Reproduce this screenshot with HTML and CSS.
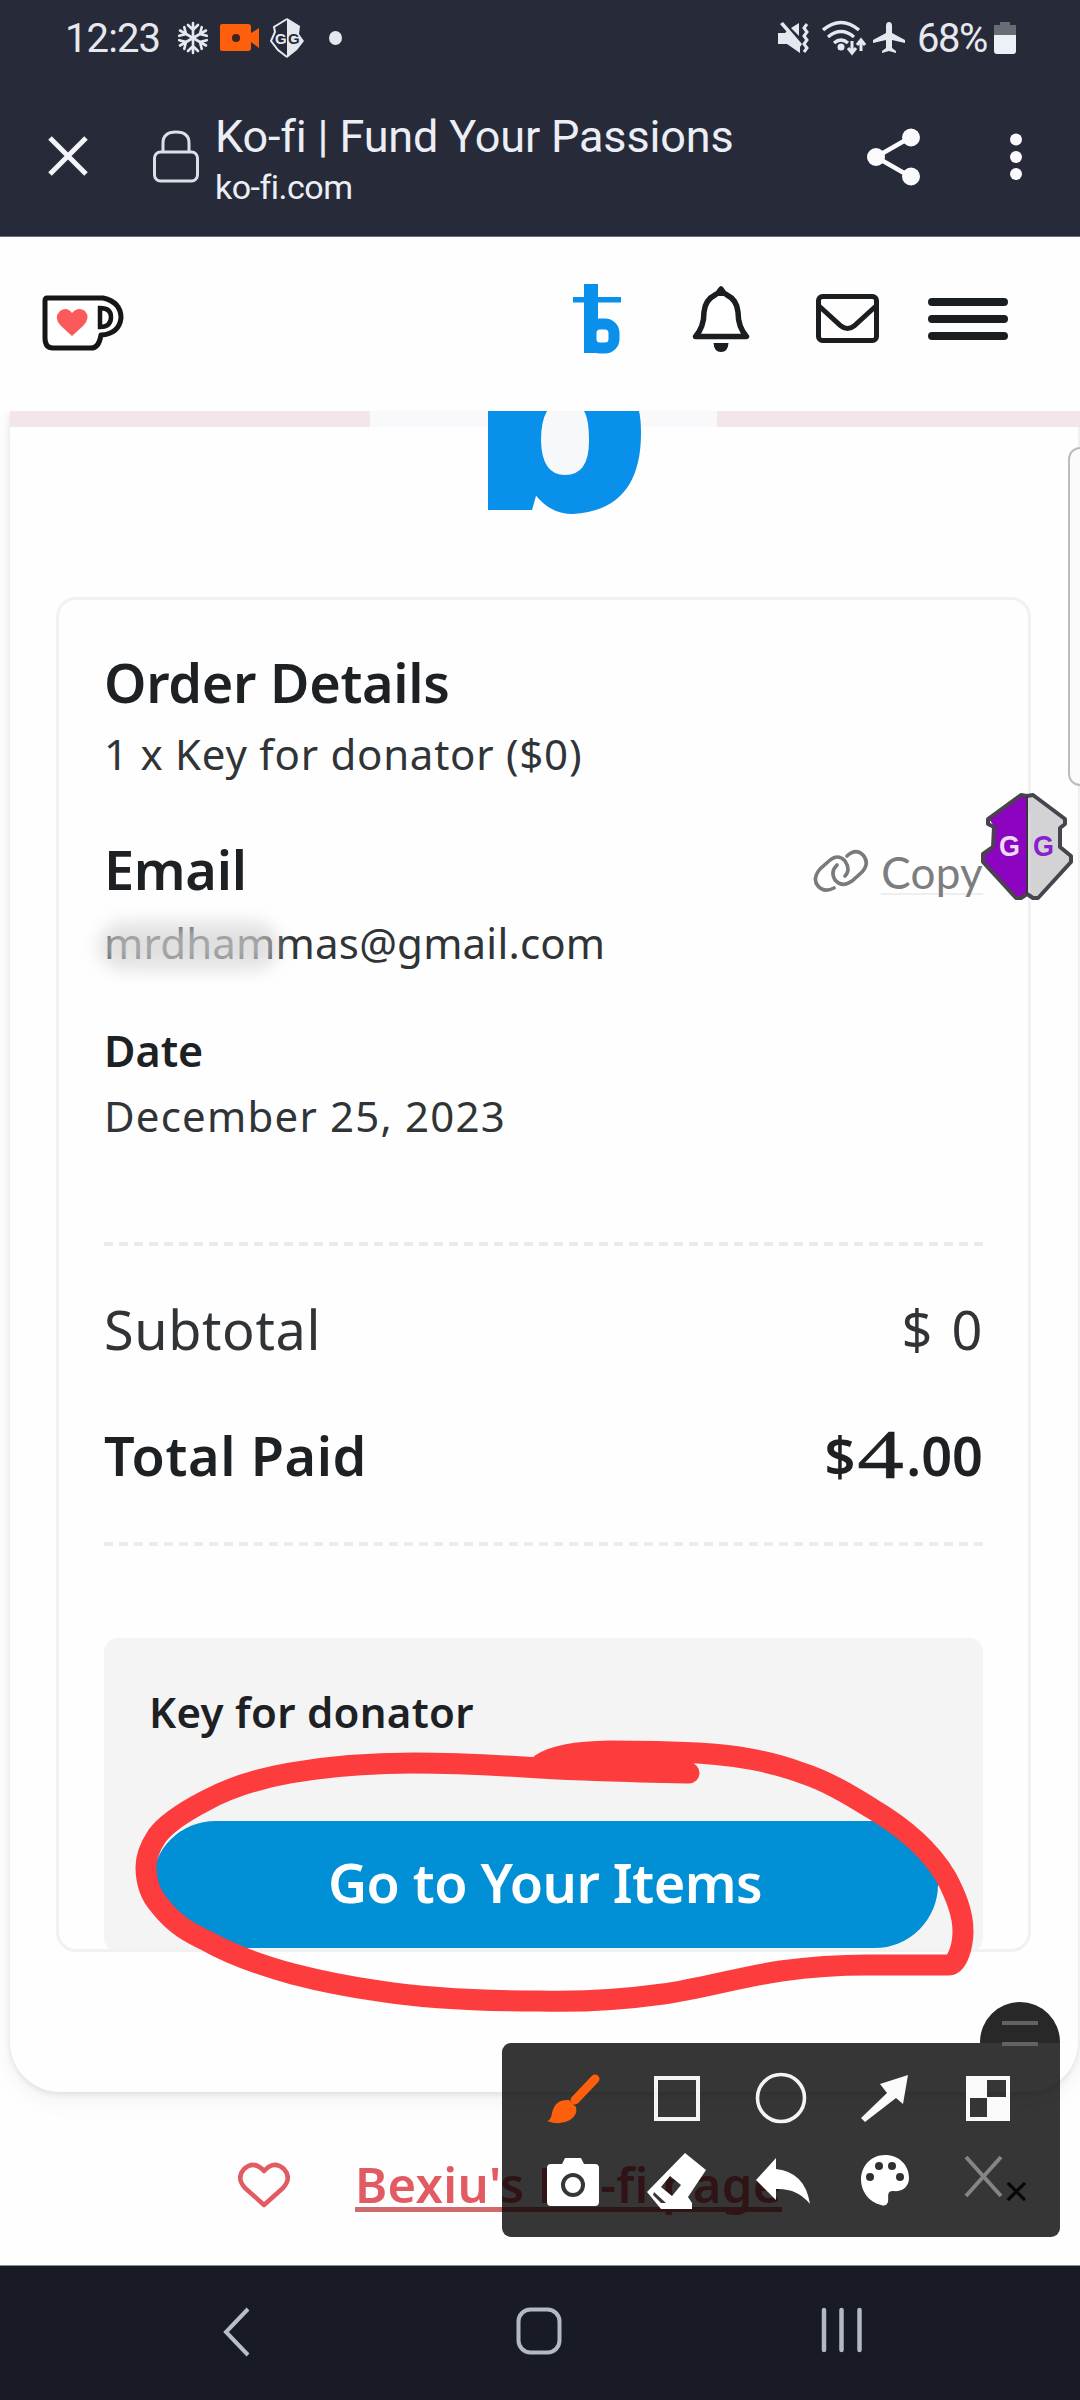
FILE: index.html
```html
<!DOCTYPE html>
<html lang="en">
<head>
<meta charset="utf-8">
<title>Ko-fi | Fund Your Passions</title>
<link rel="stylesheet" href="styles.css">
</head>
<body>
<div class="screen">
  <div class="status">
    <span class="clock">12:23</span>
    <svg class="i-snow" width="32" height="34" viewBox="-16 -17 32 34" fill="none" stroke="#e6e8f0" stroke-width="2.6" stroke-linecap="round"><g id="arm"><path d="M0-15V15M-5-13L0-8L5-13M-5 13L0 8L5 13"/></g><use href="#arm" transform="rotate(60)"/><use href="#arm" transform="rotate(120)"/></svg>
    <svg class="i-cam" width="40" height="30" viewBox="0 0 40 30"><path fill="#fd5f0c" d="M2 1H28Q31 1 31 4V10L39 5V25L31 19V25Q31 28 28 28H2Q0 28 0 26V3Q0 1 2 1Z"/><circle cx="16" cy="15" r="4" fill="#3c2420"/></svg>
    <svg class="i-gg" width="34" height="42" viewBox="0 0 34 42"><path fill="none" stroke="#e6e8f0" stroke-width="2" d="M17 2L4 10L5 15L1 24L8 33L17 40"/><path fill="#e6e8f0" d="M17 1L30 9L29 17L34 24L27 33L17 41Z"/><text x="5" y="27" font-size="15" fill="#e6e8f0">G</text><text x="18" y="27" font-size="15" fill="#272b39">G</text></svg>
    <span class="dot"></span>
    <span class="spacer"></span>
    <svg class="i-mute" width="32" height="32" viewBox="0 0 32 32"><path fill="#e6e8f0" d="M0 11H7L10 8L22 20V31L9 22H0ZM13 6L21 1V14ZM2 2L5 0L24 22L22 25Z"/><path fill="none" stroke="#e6e8f0" stroke-width="3" d="M29 2L26 6L29 10L26 14L29 18L26 22L29 26L26 30"/></svg>
    <svg class="i-wifi" width="44" height="36" viewBox="0 0 44 36" fill="none" stroke="#e6e8f0" stroke-width="3.4"><path d="M1 10Q19-5 37 10M6 17Q19 6 32 17M12 23Q19 17 26 23"/><circle cx="19" cy="27" r="3.5" fill="#e6e8f0" stroke="none"/><path stroke-width="3" d="M30 21V32M26 28L30 33L34 28M39 31V21M35 25L39 20L43 25"/></svg>
    <svg class="i-plane" width="32" height="32" viewBox="0 0 32 32"><path fill="#e6e8f0" d="M16 0Q19 0 19 4V11L32 18V21L19 18V26L23 29V31L16 29L9 31V29L13 26V18L0 21V18L13 11V4Q13 0 16 0Z"/></svg>
    <span class="pct">68%</span>
    <svg class="i-batt" width="22" height="32" viewBox="0 0 22 32"><path fill="#686c74" d="M6 0H16V3H22V14H0V3H6Z"/><path fill="#eef0f8" d="M0 13H22V29Q22 32 19 32H3Q0 32 0 29Z"/></svg>
  </div>

  <div class="browser">
    <svg class="b-close" width="40" height="40" viewBox="0 0 40 40" stroke="#f4f5fa" stroke-width="5"><path d="M2 2L38 38M38 2L2 38"/></svg>
    <svg class="b-lock" width="46" height="53" viewBox="0 0 46 53" fill="none" stroke="#dddfe8" stroke-width="3"><rect x="1.5" y="22" width="43" height="29" rx="6"/><path d="M10 22V13Q10 2 23 2Q36 2 36 13V22"/></svg>
    <div class="b-text"><div class="b-title">Ko-fi | Fund Your Passions</div><div class="b-url">ko-fi.com</div></div>
    <span class="spacer"></span>
    <svg class="b-share" width="54" height="58" viewBox="0 0 54 58"><path d="M44 9L9 29L44 49" fill="none" stroke="#fafafc" stroke-width="4.5"/><g fill="#fafafc"><circle cx="44" cy="9.500" r="9"/><circle cx="9" cy="29" r="9"/><circle cx="44" cy="48.500" r="9"/></g></svg>
    <svg class="b-more" width="12" height="48" viewBox="0 0 12 48" fill="#fafafc"><circle cx="6" cy="6.500" r="6"/><circle cx="6" cy="24" r="6"/><circle cx="6" cy="41" r="6"/></svg>
  </div>

  <div class="site">
    <svg class="s-cup" width="82" height="56" viewBox="0 0 82 56"><path fill="#fff" stroke="#141618" stroke-width="5" stroke-linejoin="round" d="M5 3H61Q79 7 79 23Q77 39 59 40Q57 53 49 53H11Q3 53 3 43V6Q3 3 5 3Z"/><path fill="#fff" stroke="#141618" stroke-width="4.500" d="M58 13V32Q69 32 69 22Q69 13 58 13Z"/><path fill="#fb5a5c" d="M30 41L19 31Q11 23 18 16Q25 11 30 18Q36 11 43 16Q49 23 41 31Z"/></svg>
    <span class="spacer"></span>
    <svg class="s-user" width="48" height="70" viewBox="0 0 48 70"><rect x="11" y="0" width="14" height="69" fill="#0890ea"/><rect x="0" y="13" width="48" height="5.500" fill="#0890ea"/><rect x="18" y="40" width="23" height="24" rx="9" fill="#fff" stroke="#0890ea" stroke-width="11"/><rect x="11" y="34" width="12" height="35" fill="#0890ea"/></svg>
    <svg class="s-bell" width="58" height="67" viewBox="0 0 58 67"><path fill="#fff" stroke="#1b1e20" stroke-width="5.500" stroke-linejoin="round" d="M3.500 50.500Q12 41 12 26Q13 14 23 9Q27 7 29 3Q31 7 35 9Q45 14 46 26Q46 41 54.500 50.500Z"/><path fill="#1b1e20" d="M24 6L29 0L34 6L32 10H26ZM21.500 57H36.500Q36 66 29 66Q22 66 21.500 57Z"/></svg>
    <svg class="s-mail" width="63" height="50" viewBox="0 0 63 50" fill="none" stroke="#1b1e20" stroke-width="5"><rect x="2.500" y="2.500" width="58" height="44" rx="4"/><path d="M3 12L25 32Q31.500 37 38 32L60 12"/></svg>
    <svg class="s-menu" width="80" height="42" viewBox="0 0 80 42" fill="#1b1e20"><rect width="80" height="8" rx="4"/><rect y="17" width="80" height="8" rx="4"/><rect y="34" width="80" height="8" rx="4"/></svg>
  </div>

  <div class="page">
    <div class="card">
      <div class="banner"><span class="pink"></span><span class="gap"></span><span class="pink right"></span></div>
      <svg class="avatar" width="156" height="106" viewBox="0 0 156 106"><path fill="#0890ea" d="M0 0H60V85H48L44 99H0Z"/><path fill="#0890ea" d="M46 82Q61 103 85 103Q153 99 153 22Q153 8 151 0H30V82Z"/><path fill="#f7f8fa" d="M59 0Q53 10 53 30Q54 64 77 64Q101 64 101 30Q101 8 96 0Z"/></svg>
      <div class="order">
        <div class="h1 od">Order Details</div>
        <div class="line item">1 x Key for donator ($0)</div>
        <div class="email-row"><div class="h1 em">Email</div>
          <div class="copy"><svg width="56" height="44" viewBox="0 0 56 44" fill="none" stroke="#777b7d" stroke-width="3.600" stroke-linecap="round"><path d="M21 39Q11 44 5 37Q-1 30 7 20L16 12Q25 4 32 12Q38 21 32 27"/><path d="M34 7Q43-1 50 6Q57 14 49 23L39 32Q29 39 22 31Q17 23 24 16"/></svg><span class="copy-t">Copy</span></div>
        </div>
        <div class="line addr">mrdhammas@gmail.com<span class="smudge"></span></div>
        <div class="date">Date</div>
        <div class="line dval">December 25, 2023</div>
        <div class="dash d1"></div>
        <div class="row sub"><span class="sub-l">Subtotal</span><span class="sub-r">$ 0</span></div>
        <div class="row tot"><span class="tot-l">Total Paid</span><span class="tot-r">$<span class="four">4</span>.00</span></div>
        <div class="dash d2"></div>
        <div class="itembox">
          <div class="key">Key for donator</div>
          <div class="btn"><span>Go to Your Items</span></div>
        </div>
      </div>
    </div>
    <div class="foot">
      <svg width="52" height="46" viewBox="0 0 52 46" fill="none" stroke="#e25a62" stroke-width="4.500" stroke-linejoin="round"><path d="M26 43L7 26Q-2 16 6 7Q16-2 26 9Q36-2 46 7Q54 16 45 26Z"/></svg>
      <span class="foot-t">Bexiu's Ko-fi page</span>
      <span class="foot-x">×</span>
    </div>
    <div class="edge"></div>
  </div>

  <div class="nav">
    <svg width="28" height="50" viewBox="0 0 28 50" fill="none" stroke="#b9bdc9" stroke-width="4"><path d="M25 2L3 25L25 48"/></svg>
    <svg width="46" height="48" viewBox="0 0 46 48" fill="none" stroke="#b4b8c4" stroke-width="4"><rect x="2.500" y="2.500" width="41" height="43" rx="12"/></svg>
    <svg width="42" height="46" viewBox="0 0 42 46" stroke="#b4b8c4" stroke-width="4.500" stroke-linecap="round"><path d="M3 3V43M20.500 3V43M38.500 3V43"/></svg>
  </div>

  <svg class="gg" width="92" height="108" viewBox="0 0 92 108"><path fill="#8c04c0" d="M46 2L40 3L8 26L13 33L12 54L2 62V69L36 105L46 101Z"/><path fill="#d3d3d6" d="M46 2L53 3L84 26L79 33L80 54L90 62V68L54 105L46 101Z"/><path fill="none" stroke="#49434e" stroke-width="4" stroke-linejoin="round" d="M46 3L40 2L7 26V31L13 34L12 54L2 61V69L35 105H40L46 101L52 105H57L90 69V63L79 54V35L84 31V26L52 2Z"/><path stroke="#3c3344" stroke-width="2" d="M46 3V101"/><path stroke="#ddd" stroke-width="1.500" d="M48.500 20V100"/><text x="18" y="63" font-size="30" fill="#eadcf2" textLength="21" lengthAdjust="spacingAndGlyphs">G</text><text x="52" y="63" font-size="30" fill="#8a1fd0" textLength="21" lengthAdjust="spacingAndGlyphs">G</text></svg>

  <svg class="mark" width="860" height="290" viewBox="130 1730 860 290" fill="none" stroke="#fd3c3d" stroke-width="21" stroke-linejoin="round" stroke-linecap="round"><path d="M689 1773C640 1772 590 1771 540 1768C495 1765 460 1763 413 1763C370 1763 330 1766 290 1773C250 1780 225 1790 205 1801C182 1813 165 1825 157 1836C149 1848 146 1857 146 1867C146 1880 150 1895 160 1906C175 1925 190 1933 207 1941C230 1954 260 1965 293 1974C320 1981 350 1987 379 1991C430 1999 480 2001 540 2001C580 2002 620 2000 663 1994C700 1989 740 1977 781 1971C810 1967 835 1965 867 1965H948C958 1965 963 1945 963 1931C963 1912 955 1894 946 1877C930 1850 905 1828 871 1808C850 1795 827 1781 802 1773C765 1759 730 1755 698 1753C660 1751 640 1751 610 1751C575 1752 555 1755 541 1764"/><path d="M560 1762L680 1764" stroke-width="18"/></svg>

  <div class="tools">
    <div class="knob"></div>
    <div class="grid">
      <svg viewBox="0 0 62 58"><path stroke="#fd5f0c" stroke-width="9" stroke-linecap="round" d="M53 9L33 30"/><path fill="#fd5f0c" d="M27 30L34 37Q36 45 28 50Q18 56 5 51Q9 50 10 43Q13 29 27 30Z"/></svg>
      <svg viewBox="0 0 62 58"><rect x="10" y="8" width="42" height="41" fill="none" stroke="#f4f4f4" stroke-width="4"/></svg>
      <svg viewBox="0 0 62 58"><circle cx="31" cy="28" r="23.500" fill="none" stroke="#f4f4f4" stroke-width="3.600"/></svg>
      <svg viewBox="0 0 62 58"><path fill="#fafafa" d="M7 48L33 23L26 14L54 5L49 34L42 28L11 52Z"/></svg>
      <svg viewBox="0 0 62 58"><path fill="#fafafa" fill-rule="evenodd" d="M8 6H52V51H8ZM29 10V27H48V10ZM12 28V47H29V28Z"/></svg>
      <svg viewBox="0 0 62 58"><path fill="#fff" d="M9 12H20L23 6H39L42 12H53Q57 12 57 16V50Q57 54 53 54H9Q5 54 5 50V16Q5 12 9 12Z"/><circle cx="31" cy="33" r="10" fill="#fff" stroke="#363636" stroke-width="4"/></svg>
      <svg viewBox="0 0 62 58"><path fill="#fff" fill-rule="evenodd" d="M39 1L60 18L42 45L46 51V57H15L1 40ZM24 24L15 35L26 44L35 33ZM8 40L7 43L15 51H20Z"/></svg>
      <svg viewBox="0 0 62 58"><path fill="#fff" d="M6 28L26 6V17Q55 20 60 52Q47 36 26 37V48Z"/></svg>
      <svg viewBox="0 0 62 58"><path fill="#fff" d="M31 3C45 3 55 13 55 26C55 35 48 40 39 39C32 39 35 45 34 50Q32 55 27 53C14 50 7 38 7 28C7 14 17 3 31 3Z"/><g fill="#303030"><circle cx="16" cy="25" r="4"/><circle cx="25" cy="14" r="4"/><circle cx="38" cy="14" r="4"/><circle cx="46" cy="25" r="4"/></g></svg>
      <svg viewBox="0 0 62 58"><path stroke="#858585" stroke-width="4" d="M8 5L43 44M43 5L8 44"/></svg>
    </div>
  </div>
</div>
</body>
</html>
```
FILE: styles.css
```css
* { box-sizing: border-box; }
body { margin: 0; background: #fdfdfd; }
svg { display: block; flex: none; }
.screen { position: relative; width: 1080px; height: 2400px; overflow: hidden; display: flex; flex-direction: column; font-family: "Noto Sans", "Open Sans", sans-serif; color: #1d2124; white-space: nowrap; }
.spacer { flex: 1; }

.status { height: 76px; background: #272b39; display: flex; align-items: center; padding: 0 64px 0 65px; font-family: Roboto, sans-serif; color: #e6e8f0; font-size: 40px; }
.clock { width: 112px; letter-spacing: -0.9px; }
.i-cam { margin-left: 11px; }
.i-gg { margin-left: 10px; font-family: "Liberation Sans", sans-serif; font-weight: bold; }
.dot { width: 13px; height: 14px; margin-left: 25px; border-radius: 50%; background: #e6e8f0; }
.i-wifi { margin-left: 12px; }
.i-plane { margin: 0 12px 0 7px; }
.pct { width: 77px; letter-spacing: -1.5px; }

.browser { height: 161px; background: #272b39; display: flex; align-items: center; padding: 0 58px 0 48px; font-family: Roboto, sans-serif; color: #eceef6; border-bottom: 1px solid #6d7078; }
.b-lock { margin: 0 16px 0 65px; }
.b-title { font-size: 45px; line-height: 56px; letter-spacing: -0.15px; }
.b-url { font-size: 34px; line-height: 44px; letter-spacing: -0.5px; }
.b-text { padding-top: 6px; }
.b-share, .b-more { margin-top: 2px; }
.b-more { margin-left: 89px; }

.site { height: 174px; background: #fefefe; display: flex; align-items: center; padding: 0 72px 10px 42px; }
.s-cup { margin-top: 8px; }
.s-user { margin-right: 71px; }
.s-bell { margin-right: 66px; }
.s-mail { margin-right: 49px; }

.page { position: relative; height: 1855px; overflow: hidden; background: #fefefe; border-bottom: 1px solid #8b8b8b; }
.card { margin: 0 2px 0 10px; height: 1681px; background: #fefefe; border-radius: 0 0 50px 50px; box-shadow: 0 2px 6px rgba(0,0,0,.1), 0 8px 24px rgba(0,0,0,.05); }
.banner { display: flex; height: 16px; margin-right: -2px; }
.pink { width: 360px; background: #f3e6ea; }
.pink.right { width: 363px; }
.gap { flex: 1; background: #f9f9fc; }
.avatar { margin: -16px 0 0 478px; }
.order { margin: 80px 47px 0 46px; height: 1355px; border: 3px solid #f1f1f1; border-radius: 20px; padding: 52px 45px 0; overflow: hidden; }
.h1 { font-size: 54px; line-height: 60px; font-weight: 600; letter-spacing: -0.3px; }
.line { font-size: 42px; line-height: 52px; color: #303437; }
.item { margin-top: 16px; letter-spacing: .75px; }
.email-row { display: flex; justify-content: space-between; margin-top: 59px; height: 60px; }
.copy { display: flex; color: #7b7d7f; font-family: Lato, sans-serif; font-size: 44px; line-height: 54px; padding-top: 6px; }
.copy svg { margin: 4px 12px 0 0; }
.copy-t { height: 50px; border-bottom: 2px solid #eee; letter-spacing: .3px; }
.addr { position: relative; margin-top: 18px; letter-spacing: .2px; }
.smudge { position: absolute; left: -4px; top: 6px; width: 178px; height: 46px; background: rgba(212,212,212,.72); filter: blur(9px); border-radius: 22px; }
.date { margin-top: 56px; font-size: 43px; line-height: 52px; font-weight: 600; }
.dval { margin-top: 13px; letter-spacing: 1.2px; }
.dash { height: 4px; background: repeating-linear-gradient(90deg, #ebebeb 0 9px, transparent 9px 15px); }
.d1 { margin-top: 100px; }
.row { display: flex; justify-content: space-between; font-size: 54px; line-height: 60px; letter-spacing: .6px; }
.sub { margin-top: 53px; color: #303437; }
.sub-r { word-spacing: 4px; }
.tot { margin-top: 66px; font-weight: 600; }
.tot-r { display: flex; letter-spacing: 0; }
.four { width: 51px; text-align: center; font-family: "Liberation Serif", serif; font-size: 69px; font-weight: 400; line-height: 60px; transform: scaleX(1.35); -webkit-text-stroke: .5px #1d2124; }
.d2 { margin-top: 57px; }
.itembox { margin-top: 92px; height: 314px; background: #f4f4f4; border-radius: 14px; padding: 48px 45px 0 48px; }
.key { margin-left: -3px; font-size: 42px; line-height: 52px; font-weight: 600; letter-spacing: .3px; }
.btn { margin-top: 83px; height: 127px; border-radius: 64px; background: #018fd6; color: #fff; display: flex; justify-content: center; align-items: center; font-size: 54px; font-weight: 600; letter-spacing: -.55px; padding-bottom: 6px; }

.foot { display: flex; align-items: flex-start; padding: 58px 0 0 238px; color: #e25a62; }
.foot svg { margin-top: 12px; }
.foot-t { margin-left: 65px; height: 62px; border-bottom: 5px solid #cf6b6c; font-size: 49px; line-height: 68px; font-weight: 600; letter-spacing: .3px; }
.foot-x { margin-left: 222px; font-size: 44px; line-height: 80px; color: #222; }
.edge { position: absolute; left: 1068px; top: 36px; width: 24px; height: 339px; border: 2px solid #bcbcbc; border-radius: 14px; background: #fbfbfb; }

.nav { flex: 1; background: #181b24; display: flex; align-items: flex-start; padding: 41px 0 0 223px; }
.nav svg + svg { margin-left: 265px; }
.nav svg + svg + svg { margin-left: 259px; }

.gg { position: absolute; left: 981px; top: 793px; font-family: "Liberation Sans", sans-serif; font-weight: bold; }
.mark { position: absolute; left: 130px; top: 1730px; }

.tools { position: absolute; left: 502px; top: 2043px; width: 558px; height: 194px; border-radius: 9px 0 9px 9px; background: rgba(0,0,0,.79); }
.knob { position: absolute; right: 0; top: -41px; width: 80px; height: 41px; border-radius: 40px 40px 0 0; background: #282828; }
.knob::before { content: ""; position: absolute; left: 22px; top: 19px; width: 36px; height: 17px; border: solid #626262; border-width: 4px 0; }
.grid { display: grid; grid-template-columns: repeat(5, 62px); column-gap: 42px; row-gap: 24px; padding: 27px 0 0 40px; }
.grid svg { width: 62px; height: 58px; }
```
